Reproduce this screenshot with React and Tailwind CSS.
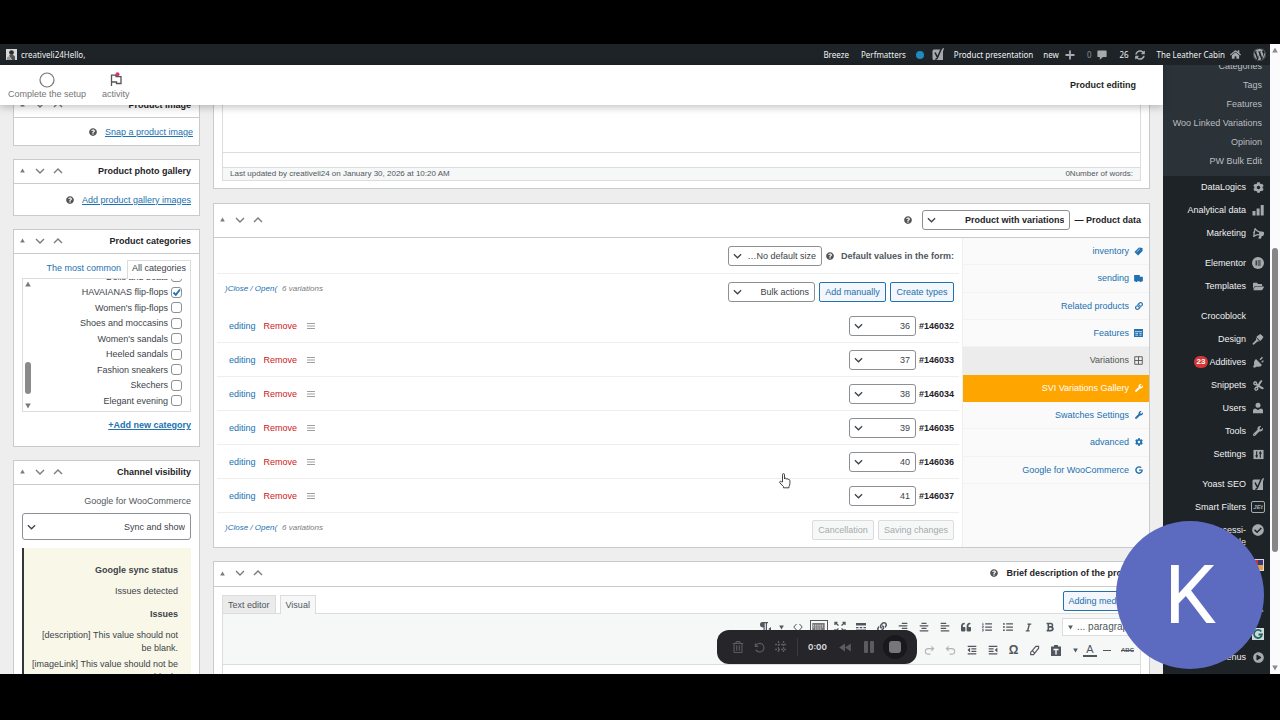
import React from "react";
import {
  FaWordpress, FaCog, FaHome, FaBullhorn, FaFolderOpen, FaCut,
  FaWrench, FaCheckCircle, FaPlayCircle, FaQuestionCircle, FaLink, FaGoogle, FaSyncAlt,
  FaBold, FaItalic, FaQuoteLeft, FaAlignLeft, FaAlignCenter, FaAlignRight, FaListUl, FaListOl,
  FaIndent, FaOutdent, FaRegTrashAlt,
} from "react-icons/fa";

const LINK = "text-[#2271b1]";

function Chevron({ className = "" }) {
  return (
    <svg viewBox="0 0 10 10" className={className} fill="none" stroke="currentColor" strokeWidth="1.4">
      <path d="M1 3 5 7l4-4" />
    </svg>
  );
}

function Triangle({ className = "" }) {
  return (
    <svg viewBox="0 0 6 6" className={className} fill="currentColor">
      <path d="M3 .6 5.8 5.4H.2z" />
    </svg>
  );
}

function Handles() {
  return (
    <div className="flex items-center gap-2 text-[#787c82]">
      <button aria-label="Toggle panel" className="flex w-[9px] justify-center"><Triangle className="size-[5px]" /></button>
      <button aria-label="Move down"><Chevron className="size-[10px]" /></button>
      <button aria-label="Move up"><Chevron className="size-[10px] rotate-180" /></button>
    </div>
  );
}

function Panel({ title, headClass = "h-6", className = "", children }) {
  return (
    <section className={"border border-[#c9cacd] bg-white " + className}>
      <header className={"flex items-center justify-between border-b border-[#c9cacd] pb-[2px] pl-1 pr-2 " + headClass}>
        <Handles />
        <h2 className="flex items-center text-[9px] font-bold text-[#1d2327]">{title}</h2>
      </header>
      {children}
    </section>
  );
}

function Help({ className = "" }) {
  return <FaQuestionCircle className={"size-2 text-[#555] " + className} />;
}

function Select({ label, value, className = "", selectClass = "" }) {
  return (
    <label className={"relative block rounded-[3px] border border-[#8c8f94] bg-white text-[#3c434a] " + className}>
      <span className="sr-only">{label}</span>
      <select dir="rtl" className={"block size-full appearance-none bg-transparent pl-4 pr-[5px] text-[9px] outline-none " + selectClass}>
        <option>{value}</option>
      </select>
      <Chevron className="pointer-events-none absolute left-1 top-1/2 size-[9px] -translate-y-1/2" />
    </label>
  );
}

function Button({ children, className = "", disabled }) {
  return (
    <button
      disabled={disabled}
      className={
        "h-5 whitespace-nowrap rounded-[2px] border text-center text-[9px] " +
        (disabled ? "border-[#dcdcde] bg-[#f6f7f7] text-[#a7aaad] " : "border-[#2271b1] bg-[#f3f6fa] text-[#2271b1] ") +
        className
      }
    >
      {children}
    </button>
  );
}

function Yoast() {
  return (
    <svg viewBox="0 0 12 13" className="h-[13px] w-3">
      <path d="M2 1.500h6.500L11 1v11H2q-1.500 0-1.500-1.500V3Q.5 1.500 2 1.500z" fill="#a7aaad" />
      <path d="M3 4.500 5.200 8.800M9.500.3 5.300 10q-.6 1.300-2 1.200" fill="none" stroke="#1d2327" strokeWidth="1.500" />
      <path d="M10.300.2h1.500L8.500 9" fill="none" stroke="#a7aaad" strokeWidth=".8" />
    </svg>
  );
}

/* ---------- Admin bar ---------- */

function AdminBar() {
  return (
    <nav className="flex h-[21px] shrink-0 items-center justify-between bg-[#1d2327] pl-[6px] pr-1 font-['Noto_Sans',sans-serif] text-[8px] text-[#f0f0f1]">
      <a href="#profile" className="flex items-center gap-1">
        <svg viewBox="0 0 11 11" className="size-[11px]">
          <rect width="11" height="11" fill="#d8d8d8" />
          <circle cx="5.5" cy="3.6" r="2.4" fill="#2b2b2b" />
          <path d="M3 6.5 6 5l3 2.5V11H6z" fill="#555" />
          <path d="M1 8.5 3.5 7 5 11H1z" fill="#999" />
        </svg>
        creativeli24Hello,
      </a>
      <div className="flex items-center text-[#f0f0f1]">
        <a href="#breeze" className="mr-3">Breeze</a>
        <a href="#perfmatters" className="mr-[10px]">Perfmatters</a>
        <span className="mr-2 size-2 rounded-full bg-[#1e8cbe]" />
        <span className="mr-[10px]"><Yoast /></span>
        <a href="#view" className="mr-[10px]">Product presentation</a>
        <a href="#new" className="mr-3 flex items-center gap-[6px]">
          new
          <svg viewBox="0 0 10 10" className="size-[10px]" stroke="#a7aaad" strokeWidth="1.8"><path d="M5 .5v9M.5 5h9" /></svg>
        </a>
        <a href="#comments" className="mr-3 flex items-center gap-[6px] text-[#8c8f94]">
          0
          <svg viewBox="0 0 10 10" className="size-[10px]" fill="#a7aaad"><path d="M1 .5h8q.6 0 .6.6v5.3q0 .6-.6.6H6L2.8 9.8V7H1q-.6 0-.6-.6V1.100Q.4.5 1 .5z" /></svg>
        </a>
        <a href="#updates" className="mr-3 flex items-center gap-[6px]">26 <FaSyncAlt className="size-[10px] text-[#a7aaad]" /></a>
        <a href="#site" className="mr-3 flex items-center gap-[5px]">The Leather Cabin <FaHome className="size-[11px] text-[#a7aaad]" /></a>
        <FaWordpress className="size-[13px] text-[#a7aaad]" />
      </div>
    </nav>
  );
}

/* ---------- Right side menu ---------- */

const SUBMENU = ["Categories", "Tags", "Features", "Woo Linked Variations", "Opinion", "PW Bulk Edit"];

const Bars = () => (
  <svg viewBox="0 0 12 12" className="size-3" fill="currentColor"><path d="M.5 7h3v4.500h-3zM4.600 4.500h3v7h-3zM8.700 1h3v10.500h-3z" /></svg>
);
const Elementor = () => (
  <svg viewBox="0 0 12 12" className="size-3"><circle cx="6" cy="6" r="6" fill="currentColor" /><path d="M3.600 3.500h1.200v5H3.600zM5.700 3.500h3v1h-3zM5.700 5.500h3v1h-3zM5.700 7.500h3v1h-3z" fill="#1d2327" /></svg>
);
const Brush = () => (
  <svg viewBox="0 0 12 12" className="size-3" fill="currentColor"><path d="M6 2.500 8.500 1l3 3L9.800 6.500 8.300 8 4.300 4zM3.800 4.600 7.600 8.400 5.800 8.200 2 11.600Q.8 12 .4 10.800L4.200 6.800z" /></svg>
);
const Plug = () => (
  <svg viewBox="0 0 12 12" className="size-3" fill="currentColor"><path d="M7.500 3.300 10 .8l1 1-2.400 2.500zM9.300 5.800 11 4.200l.9.9-1.700 1.600zM4 3l6 6q-2 2.500-5 1.600L2.500 11.800 1 11l1.200-2.500Q1.300 5.500 4 3z" /></svg>
);
const Person = () => (
  <svg viewBox="0 0 12 12" className="size-3" fill="currentColor"><circle cx="6" cy="3.300" r="2.500" /><path d="M1 11.200V8.500Q1 6.500 3.200 6.400L6 8l2.800-1.600Q11 6.500 11 8.500v2.700z" /></svg>
);
const Sliders = () => (
  <svg viewBox="0 0 12 12" className="size-[11px]"><path d="M.5 1h11v10H.5z" fill="currentColor" /><path d="M4 2.500v7M2.600 7.500h2.800M8 2.500v7M6.600 4.500h2.800" stroke="#1d2327" strokeWidth="1.200" /></svg>
);
const Jet = () => (
  <span className="flex h-3 w-[14px] items-center justify-center rounded-[2px] border border-[#a7aaad] text-[6px] font-bold italic leading-none">JEt</span>
);
const Mosaic = () => (
  <svg viewBox="0 0 12 12" className="size-3"><path d="M0 0h12v12H0z" fill="#d8d8e8" /><path d="M1 1h5v5H1z" fill="#c33" /><path d="M6 1h5v5H6z" fill="#3d3878" /><path d="M1 6h5v5H1z" fill="#39a" /><path d="M6 6h5v5H6z" fill="#e8a33d" /></svg>
);
const GlobeBadge = () => (
  <svg viewBox="0 0 12 12" className="size-3"><path d="M0 0h12v12H0z" fill="#cfd8dc" /><path d="M9.200 3.500A4 4 0 1 0 10 6.500H6.500" fill="none" stroke="#1d6b5f" strokeWidth="1.800" /></svg>
);
const Dot = () => <svg viewBox="0 0 12 12" className="size-3" fill="currentColor"><path d="M2 1l10 5-10 5z" /></svg>;

const MENU = [
  [["DataLogics", <FaCog className="size-[11px]" />], ["Analytical data", <Bars />], ["Marketing", <FaBullhorn className="size-[11px] -scale-x-100 rotate-[10deg]" />]],
  [["Elementor", <Elementor />], ["Templates", <FaFolderOpen className="size-[11px]" />]],
  [
    ["Crocoblock", null],
    ["Design", <Brush />],
    ["Additives", <Plug />, "23"],
    ["Snippets", <FaCut className="size-[11px] -rotate-12" />],
    ["Users", <Person />],
    ["Tools", <FaWrench className="size-[10px]" />],
    ["Settings", <Sliders />],
  ],
  [
    ["Yoast SEO", <Yoast />],
    ["Smart Filters", <Jet />],
    ["Accessi-ble", <FaCheckCircle className="size-3" />],
    ["", <Mosaic />],
    ["", null],
    ["", <Dot />],
    ["", <GlobeBadge />],
    ["Menus", <FaPlayCircle className="size-[11px]" />],
  ],
];

function SideMenu() {
  return (
    <aside className="w-[107px] shrink-0 overflow-hidden bg-[#1d2327] text-[9px] text-[#f0f0f1]">
      <div className="bg-[#2c3338] pb-[6px]">
        <ul className="-mt-2 flex h-[113px] flex-col pr-2 text-right text-[#bbbec2]">
          {SUBMENU.map((t) => (
            <li key={t} className="flex flex-1 items-center justify-end"><a href="#menu">{t}</a></li>
          ))}
        </ul>
      </div>
      <div className="flex flex-col gap-[7px]">
        {MENU.map((group, i) => (
          <ul key={i}>
            {group.map(([t, icon, badge], j) => (
              <li key={j}>
                <a href="#menu" className="flex min-h-[23px] items-start justify-end gap-[5px] pr-[5px] pt-[5px] leading-3">
                  {badge && <span className="-mr-1 h-3 rounded-full bg-[#d63638] px-[3px] text-[8px] font-bold text-white">{badge}</span>}
                  {t === "Accessi-ble" ? <span className="pb-[6px] text-right">Accessi-<br />ble</span> : <span>{t}</span>}
                  <span className="flex h-3 w-[14px] items-center justify-center text-[#a7aaad]">{icon}</span>
                </a>
              </li>
            ))}
          </ul>
        ))}
      </div>
    </aside>
  );
}

/* ---------- Left column ---------- */

const CATEGORIES = [
  "Dolls and boats", "HAVAIANAS flip-flops", "Women's flip-flops", "Shoes and moccasins", "Women's sandals",
  "Heeled sandals", "Fashion sneakers", "Skechers", "Elegant evening", "",
];

function LeftColumn() {
  return (
    <div className="-mt-3 flex w-[187px] shrink-0 flex-col gap-[13px] text-[9px] text-[#50575e]">
      <Panel title="Product image">
        <div className="flex h-[27px] items-center justify-end gap-2 pr-[6px]">
          <Help />
          <a href="#image" className={LINK + " underline"}>Snap a product image</a>
        </div>
      </Panel>

      <Panel title="Product photo gallery">
        <div className="flex h-[31px] items-center justify-end gap-2 pr-2">
          <Help />
          <a href="#gallery" className={LINK + " underline"}>Add product gallery images</a>
        </div>
      </Panel>

      <Panel title="Product categories">
        <div className="px-2 pb-[15px] pt-[6px]">
          <div className="flex justify-end">
            <button className={LINK + " h-4 px-[6px]"}>The most common</button>
            <button className="-mb-px h-[19px] border border-b-0 border-[#dcdcde] bg-white px-1 pb-1 text-[#3c434a]">All categories</button>
          </div>
          <div className="flex h-[134px] overflow-hidden border border-[#dcdcde]">
            <div className="flex w-[10px] flex-col items-center justify-between py-[2px] text-[#7a7a7a]">
              <Triangle className="size-[6px]" />
              <span className="mt-[66px] h-8 w-[6px] rounded-full bg-[#8a8a8a]" />
              <Triangle className="size-[6px] rotate-180" />
            </div>
            <ul className="-mt-[10px] flex h-[155px] flex-1 flex-col pr-2">
              {CATEGORIES.map((c, i) => (
                <li key={i} className="flex flex-1 items-center">
                  <label className="flex flex-1 items-center justify-end gap-[3px] text-[#3c434a]">
                    {c}
                    <span className="relative flex">
                      <input
                        type="checkbox"
                        aria-label={c || "Next category"}
                        defaultChecked={i === 1}
                        className="peer size-[11px] appearance-none rounded-[3px] border border-[#8c8f94] bg-white"
                      />
                      <svg viewBox="0 0 11 11" className="pointer-events-none absolute inset-0 hidden size-[11px] peer-checked:block" fill="none" stroke="#2271b1" strokeWidth="1.800">
                        <path d="M2.500 5.500 4.800 7.800 9 2.500" />
                      </svg>
                    </span>
                  </label>
                </li>
              ))}
            </ul>
          </div>
          <div className="mt-[7px] text-right"><a href="#add" className={LINK + " font-bold underline"}>+Add new category</a></div>
        </div>
      </Panel>

      <Panel title="Channel visibility" className="shrink-0">
        <div className="px-2 pt-[9px]">
          <div className="mb-[5px] text-right leading-[14px]">Google for WooCommerce</div>
          <Select label="Google for WooCommerce" value="Sync and show" className="h-[27px]" selectClass="pr-[3px]" />
          <div className="mt-2 whitespace-nowrap border-l-2 border-[#32373c] bg-[#f9f7e8] pb-3 pl-1 pr-[13px] pt-4 text-right text-[#3c434a]">
            <h3 className="mb-2 font-bold leading-[13px]">Google sync status</h3>
            <p className="mb-[10px] leading-[13px]">Issues detected</p>
            <h3 className="mb-2 font-bold leading-[13px]">Issues</h3>
            <p className="mb-[3px] leading-[13px]">[description] This value should not<br />be blank.</p>
            <p className="leading-[13px]">[imageLink] This value should not be<br />blank.</p>
          </div>
        </div>
      </Panel>
    </div>
  );
}

/* ---------- Product data ---------- */

const TABS = [
  ["inventory", <svg viewBox="0 0 10 10" className="size-[9px]" fill="currentColor"><path d="M5.500.5 9.500 1v3.500L4.500 9.500.5 5.500z" /><path d="M3 5.500 6.500 2" stroke="#fff" strokeWidth=".7" /></svg>],
  ["sending", <svg viewBox="0 0 10 8" className="h-[7px] w-[9px]" fill="currentColor"><path d="M0 0h6.500v2H10v5H8.500v1h-2V7H3.500v1h-2V7H0z" /></svg>],
  ["Related products", <FaLink className="size-[8px]" />],
  ["Features", <svg viewBox="0 0 10 9" className="h-2 w-[9px]"><path d="M0 0h10v9H0z" fill="currentColor" /><path d="M1 3h8M1.500 5h3M1.500 7h3M6 5h2.500M6 7h2.500" stroke="#fff" strokeWidth=".8" /></svg>],
  ["Variations", <svg viewBox="0 0 10 10" className="size-[9px]" fill="none" stroke="currentColor"><path d="M.8.800h8.400v8.400H.8zM5 .8v8.400M.8 5h8.400" /></svg>],
  ["SVI Variations Gallery", <FaWrench className="size-[8px]" />],
  ["Swatches Settings", <FaWrench className="size-[8px]" />],
  ["advanced", <FaCog className="size-[8px]" />],
  ["Google for WooCommerce", <FaGoogle className="size-[8px]" />],
];

const VARIATIONS = [["36", "#146032"], ["37", "#146033"], ["38", "#146034"], ["39", "#146035"], ["40", "#146036"], ["41", "#146037"]];

function OpenClose() {
  return (
    <span className="flex gap-[5px] pb-[5px] pl-2 text-[8px] italic text-[#787c82]">
      <span className={LINK}>)<a href="#toggle">Close / Open</a>(</span>
      <span>6 variations</span>
    </span>
  );
}

function ProductData() {
  return (
    <Panel
      headClass="h-[34px]"
      title={
        <>
          <Help className="mr-[10px]" />
          <Select label="Product type" value="Product with variations" className="mr-1 h-5 w-[148px]" selectClass="font-bold text-[#1d2327]" />
          — Product data
        </>
      }
    >
      <div className="flex text-[9px] text-[#50575e]">
        <div className="min-w-0 flex-1 px-[3px]">
          <div className="flex h-9 items-center justify-end border-b border-[#eee] pr-[5px]">
            <Select label="Default size" value="No default size…" className="h-5 w-[94px]" />
            <Help className="ml-1 mr-[7px]" />
            <span className="font-bold text-[#50575e]">Default values in the form:</span>
          </div>
          <div className="flex h-[35px] items-center justify-between pr-[5px]">
            <OpenClose />
            <div className="flex gap-1">
              <Select label="Bulk actions" value="Bulk actions" className="w-[87px]" />
              <Button className="w-[67px]">Add manually</Button>
              <Button className="w-16">Create types</Button>
            </div>
          </div>
          <ul>
            {VARIATIONS.map(([size, id]) => (
              <li key={id} className="flex h-[34px] items-center justify-between border-b border-[#eee] pr-[5px]">
                <div className="flex items-center gap-2 pl-3">
                  <a href="#edit" className={LINK}>editing</a>
                  <a href="#remove" className="text-[#cc1818]">Remove</a>
                  <svg viewBox="0 0 8 8" className="ml-[2px] size-2" stroke="#a0a0a0"><path d="M0 1.500h8M0 4h8M0 6.500h8" /></svg>
                </div>
                <div className="flex items-center gap-[3px]">
                  <Select label={"Size for " + id} value={size} className="h-5 w-[67px]" />
                  <strong className="text-[#1d2327]">{id}</strong>
                </div>
              </li>
            ))}
          </ul>
          <div className="flex h-[34px] items-center justify-between pr-[5px]">
            <OpenClose />
            <div className="flex gap-1">
              <Button disabled className="w-[62px]">Cancellation</Button>
              <Button disabled className="w-[76px]">Saving changes</Button>
            </div>
          </div>
        </div>
        <div className="w-[187px] shrink-0 border-l border-[#eee] bg-[#fafafa]">
          <ul className="flex h-[246px] flex-col">
            {TABS.map(([t, icon]) => (
              <li key={t} className="flex flex-1">
                <a
                  href="#tab"
                  className={
                    "flex flex-1 items-center justify-end gap-[5px] border-b pr-[6px] " +
                    (t === "Variations"
                      ? "border-[#ececec] bg-[#ececec] text-[#555]"
                      : t.startsWith("SVI")
                        ? "border-[#ffa500] bg-[#ffa500] text-white"
                        : "border-[#f3f3f3] text-[#2271b1]")
                  }
                >
                  {t}
                  <span className="flex w-[9px] justify-center">{icon}</span>
                </a>
              </li>
            ))}
          </ul>
        </div>
      </div>
    </Panel>
  );
}

/* ---------- Editors ---------- */

const Direction = () => <svg viewBox="0 0 12 10" className="h-[10px] w-3" fill="currentColor"><path d="M3.500 0H9v1.200H8V9H6.800V1.200H5.700V9H4.500V5.500Q1 5.500 1 2.800 1 0 3.500 0zM12 5v4L9.300 7z" /></svg>;
const Code = () => <svg viewBox="0 0 10 10" className="size-[10px]" fill="none" stroke="currentColor"><path d="M3.500 2 .8 5l2.700 3M6.500 2 9.200 5 6.500 8" /></svg>;
const Keyboard = () => (
  <span className="flex h-[15px] w-[18px] items-center justify-center border border-[#50575e]">
    <svg viewBox="0 0 14 9" className="h-2 w-[13px]"><path d="M0 0h14v9H0z" fill="#777" /><path d="M1 2.500h12M1 4.500h12M3 6.800h8" stroke="#fff" strokeDasharray="1 1" /></svg>
  </span>
);
const Expand = () => <svg viewBox="0 0 12 12" className="size-3" fill="none" stroke="currentColor" strokeWidth="1.300"><path d="M1 4V1.500h2.500M8.500 1.500H11V4M1 1.500l3.500 3M11 1.500l-3.500 3M1 8v2.500h2.500M8.500 10.500H11V8M1 10.500l3.500-3M11 10.500l-3.500-3" /></svg>;
const More = () => <svg viewBox="0 0 10 10" className="size-[10px]" fill="currentColor"><path d="M0 1h10v2.500H0zM0 5h2.500v1.200H0zM3.700 5h2.600v1.200H3.700zM7.500 5H10v1.200H7.500zM0 7.500h10V9H0z" /></svg>;
const Paste = () => <svg viewBox="0 0 10 11" className="h-[11px] w-[10px]"><path d="M0 1.500h3V0h4v1.500h3V11H0z" fill="#50575e" /><path d="M2.500 4.500h5M5 4.500v5" stroke="#fff" strokeWidth="1.300" /></svg>;
const Eraser = () => <svg viewBox="0 0 12 12" className="size-[11px]" fill="none" stroke="currentColor" strokeWidth="1.200"><path d="M7.500 1.500h3v2L5 10.500H1.800V8.200zM3.500 6 6.200 8.800" /></svg>;
const UndoArrow = ({ className = "" }) => <svg viewBox="0 0 12 12" className={"size-[11px] text-[#b0b3b8] " + className} fill="none" stroke="currentColor" strokeWidth="1.200"><path d="M4 1.500 1.500 4 4 6.500M1.500 4H7q3.500 0 3.500 3T7 10H5" /></svg>;
const Down = () => <Triangle className="size-[5px] rotate-180" />;
const Letter = ({ children, className = "" }) => <span className={"leading-none " + className}>{children}</span>;

const ROW1 = [
  ["Direction", <Direction />], ["Code", <Code />], ["Keyboard", <Keyboard />], ["Fullscreen", <Expand />],
  ["More", <More />], ["Link", <FaLink className="size-[10px]" />], ["Right", <FaAlignRight className="size-[10px]" />],
  ["Centre", <FaAlignCenter className="size-[10px]" />], ["Left", <FaAlignLeft className="size-[10px]" />],
  ["Quote", <FaQuoteLeft className="size-[10px] rotate-180 -scale-x-100 -scale-y-100" />], ["Numbered", <FaListOl className="size-[10px]" />],
  ["Bullets", <FaListUl className="size-[10px]" />], ["Italic", <FaItalic className="size-[9px]" />], ["Bold", <FaBold className="size-[10px]" />],
];
const ROW2 = [
  ["Redo", <UndoArrow className="-scale-x-100" />], ["Undo", <UndoArrow />],
  ["Outdent", <FaOutdent className="size-[10px]" />], ["Indent", <FaIndent className="size-[10px] -scale-x-100" />],
  ["Symbol", <Letter className="text-[12px] font-bold">Ω</Letter>], ["Clear", <Eraser />],
  ["Paste", <Paste />], ["Colours", <Down />],
  ["Colour", <Letter className="border-b-2 border-[#50575e] px-[3px] text-[11px]">A</Letter>],
  ["Line", <span className="h-px w-2 bg-[#50575e]" />], ["Strike", <Letter className="text-[6px] font-bold line-through">ABC</Letter>],
];

function ToolButton({ label, children, className = "w-[21px]" }) {
  return <button aria-label={label} className={"flex h-5 shrink-0 items-center justify-center " + className}>{children}</button>;
}

function MainColumn() {
  return (
    <div className="flex min-w-0 flex-1 flex-col">
      <section className="mb-[14px] h-[84px] shrink-0 border border-t-0 border-[#c9cacd] bg-white px-2 text-[8px]">
        <div className="h-12 border-x border-b border-[#dcdcde]" />
        <div className="h-[14px] border-x border-[#dcdcde]" />
        <div className="flex h-[14px] items-center justify-between border border-[#dcdcde] bg-[#f6f7f7] px-[7px] text-[#50575e]">
          <span>Last updated by creativeli24 on January 30, 2026 at 10:20 AM</span>
          <span>0Number of words:</span>
        </div>
      </section>
      <ProductData />
      <Panel
        className="mt-[13px] shrink-0"
        headClass="h-[25px]"
        title={<><Help className="mr-2" />Brief description of the product</>}
      >
        <div className="px-2 text-[9px] text-[#50575e]">
          <div className="flex h-[26px] justify-between">
            <div className="flex items-end gap-1">
              <button className="h-[18px] border border-b-0 border-[#dcdcde] bg-[#ebebec] px-[5px]">Text editor</button>
              <button className="-mb-px h-[19px] border border-b-0 border-[#dcdcde] bg-[#f6f7f7] px-[5px]">Visual</button>
            </div>
            <Button className="mt-1 w-[78px] pr-3">Adding media</Button>
          </div>
          <div className="h-20 border border-[#dcdcde]">
            <div className="flex h-[51px] flex-col items-end gap-[3px] border-b border-[#dcdcde] bg-[#f6f7f7] pt-[3px] text-[#50575e]">
              <div className="flex items-center">
                {ROW1.map(([l, icon], i) => (
                  <React.Fragment key={l}>
                    <ToolButton label={l}>{icon}</ToolButton>
                    {i === 0 && <ToolButton label="Direction options" className="w-3"><Down /></ToolButton>}
                  </React.Fragment>
                ))}
                <button className="ml-[2px] flex h-[18px] w-[78px] items-center gap-1 whitespace-nowrap border border-[#dcdcde] bg-white pl-[5px] text-[10px]">
                  <Down />... paragraph
                </button>
              </div>
              <div className="flex items-center pr-[2px]">
                {ROW2.map(([l, icon]) => (
                  <ToolButton key={l} label={l} className={l === "Colours" ? "w-[18px]" : l === "Colour" ? "w-3" : undefined}>{icon}</ToolButton>
                ))}
              </div>
            </div>
          </div>
        </div>
      </Panel>
    </div>
  );
}

/* ---------- Overlays ---------- */

function Recorder() {
  return (
    <div className="absolute left-[717px] top-[586px] z-20 flex h-[34px] w-[200px] items-center rounded-xl bg-[#26252a] pl-[15px] text-[#5c5b61]">
      <button aria-label="Delete"><FaRegTrashAlt className="size-3" /></button>
      <button aria-label="Restart" className="ml-[10px]">
        <svg viewBox="0 0 12 12" className="size-[11px]" fill="none" stroke="currentColor" strokeWidth="1.300"><path d="M1.500 1.500v3.200h3.200M1.800 4.500A4.700 4.700 0 1 1 2 8.300" /></svg>
      </button>
      <svg viewBox="0 0 12 12" className="ml-[10px] size-3" stroke="currentColor" strokeWidth="1.300" strokeDasharray="2 1"><path d="M3.500 0v12M8.500 0v12M0 3.500h12M0 8.500h12" /></svg>
      <span className="ml-[10px] h-[18px] w-px bg-[#3a393f]" />
      <span className="ml-[10px] w-5 whitespace-nowrap font-[Inter,sans-serif] text-[8px] font-bold text-[#d5d5d8]">0:00</span>
      <button aria-label="Rewind" className="ml-[10px]">
        <svg viewBox="0 0 14 10" className="h-[9px] w-[14px]" fill="currentColor"><path d="M7 .5v9L.5 5zM13.500.5v9L7 5z" /></svg>
      </button>
      <button aria-label="Pause" className="ml-3">
        <svg viewBox="0 0 10 12" className="h-3 w-[10px]" fill="currentColor"><rect width="4" height="12" rx="1" /><rect x="6" width="4" height="12" rx="1" /></svg>
      </button>
      <button aria-label="Stop" className="ml-[9px] flex size-6 items-center justify-center rounded-full bg-[#19181c]">
        <span className="size-3 rounded-[3px] bg-[#77767b]" />
      </button>
    </div>
  );
}

export default function App() {
  return (
    <div className="h-screen bg-black pb-[46px] pt-11 font-['Liberation_Sans',Arial,sans-serif]">
      <div className="relative flex h-full overflow-hidden leading-[12px]">
        <div className="flex min-w-0 flex-1 flex-col">
          <AdminBar />
          <div className="flex min-h-0 flex-1">
            <main className="flex min-w-0 flex-1 flex-col bg-[#eeeeef]">
              <header className="relative z-10 flex h-10 shrink-0 items-center justify-between bg-white pl-2 pr-[27px] shadow-[0_2px_8px_rgba(0,0,0,0.25)]">
                <div className="flex gap-4 pt-[2px] text-[9px] text-[#757575]">
                  <button className="flex flex-col items-center">
                    <svg viewBox="0 0 16 16" className="size-4" fill="none" stroke="#757575" strokeWidth="1.200"><circle cx="8" cy="8" r="7" /></svg>
                    Complete the setup
                  </button>
                  <button className="flex flex-col items-center">
                    <svg viewBox="0 0 16 16" className="size-4" fill="none" stroke="#555" strokeWidth="1.300">
                      <path d="M3.500 14V3.200h4.500v1.500h5v6.800H8.500V10h-5" />
                      <circle cx="9.500" cy="2.200" r="2" fill="#d6336c" stroke="none" />
                    </svg>
                    activity
                  </button>
                </div>
                <h1 className="text-[9px] font-bold text-[#1e1e1e]">Product editing</h1>
              </header>
              <div className="flex min-h-0 flex-1 gap-[13px] overflow-hidden px-[13px]">
                <LeftColumn />
                <MainColumn />
              </div>
            </main>
            <SideMenu />
          </div>
        </div>
        <div className="flex w-[10px] shrink-0 flex-col items-center bg-[#fbfbfd] py-[3px] text-[#8a8a8a]">
          <Triangle className="size-[6px]" />
          <span className="mt-[195px] h-[304px] w-[6px] rounded-full bg-[#868686]" />
          <Triangle className="mt-auto size-[6px] rotate-180" />
        </div>
        <Recorder />
        <svg viewBox="0 0 12 16" className="absolute left-[779px] top-[429px] h-4 w-3" fill="#fff" stroke="#333" strokeWidth=".9" strokeLinejoin="round">
          <path d="M3.500 9V1.800q0-1.200 1-1.200t1 1.200V6q.2-1 1.100-.8.8.2.8 1 .2-.7 1-.5t.8 1q.2-.5.9-.3t.8 1.200v3q0 1.500-.9 2.700v1.500H4.500v-1.200L.8 9.800q-.5-1 .3-1.400.8-.3 1.500.4z" />
        </svg>
        <div className="absolute right-4 top-[477px] z-20 flex size-[148px] items-center justify-center rounded-full bg-[#5c6bc0] font-[Roboto,sans-serif] text-[82px] leading-none text-white">
          K
        </div>
      </div>
    </div>
  );
}
